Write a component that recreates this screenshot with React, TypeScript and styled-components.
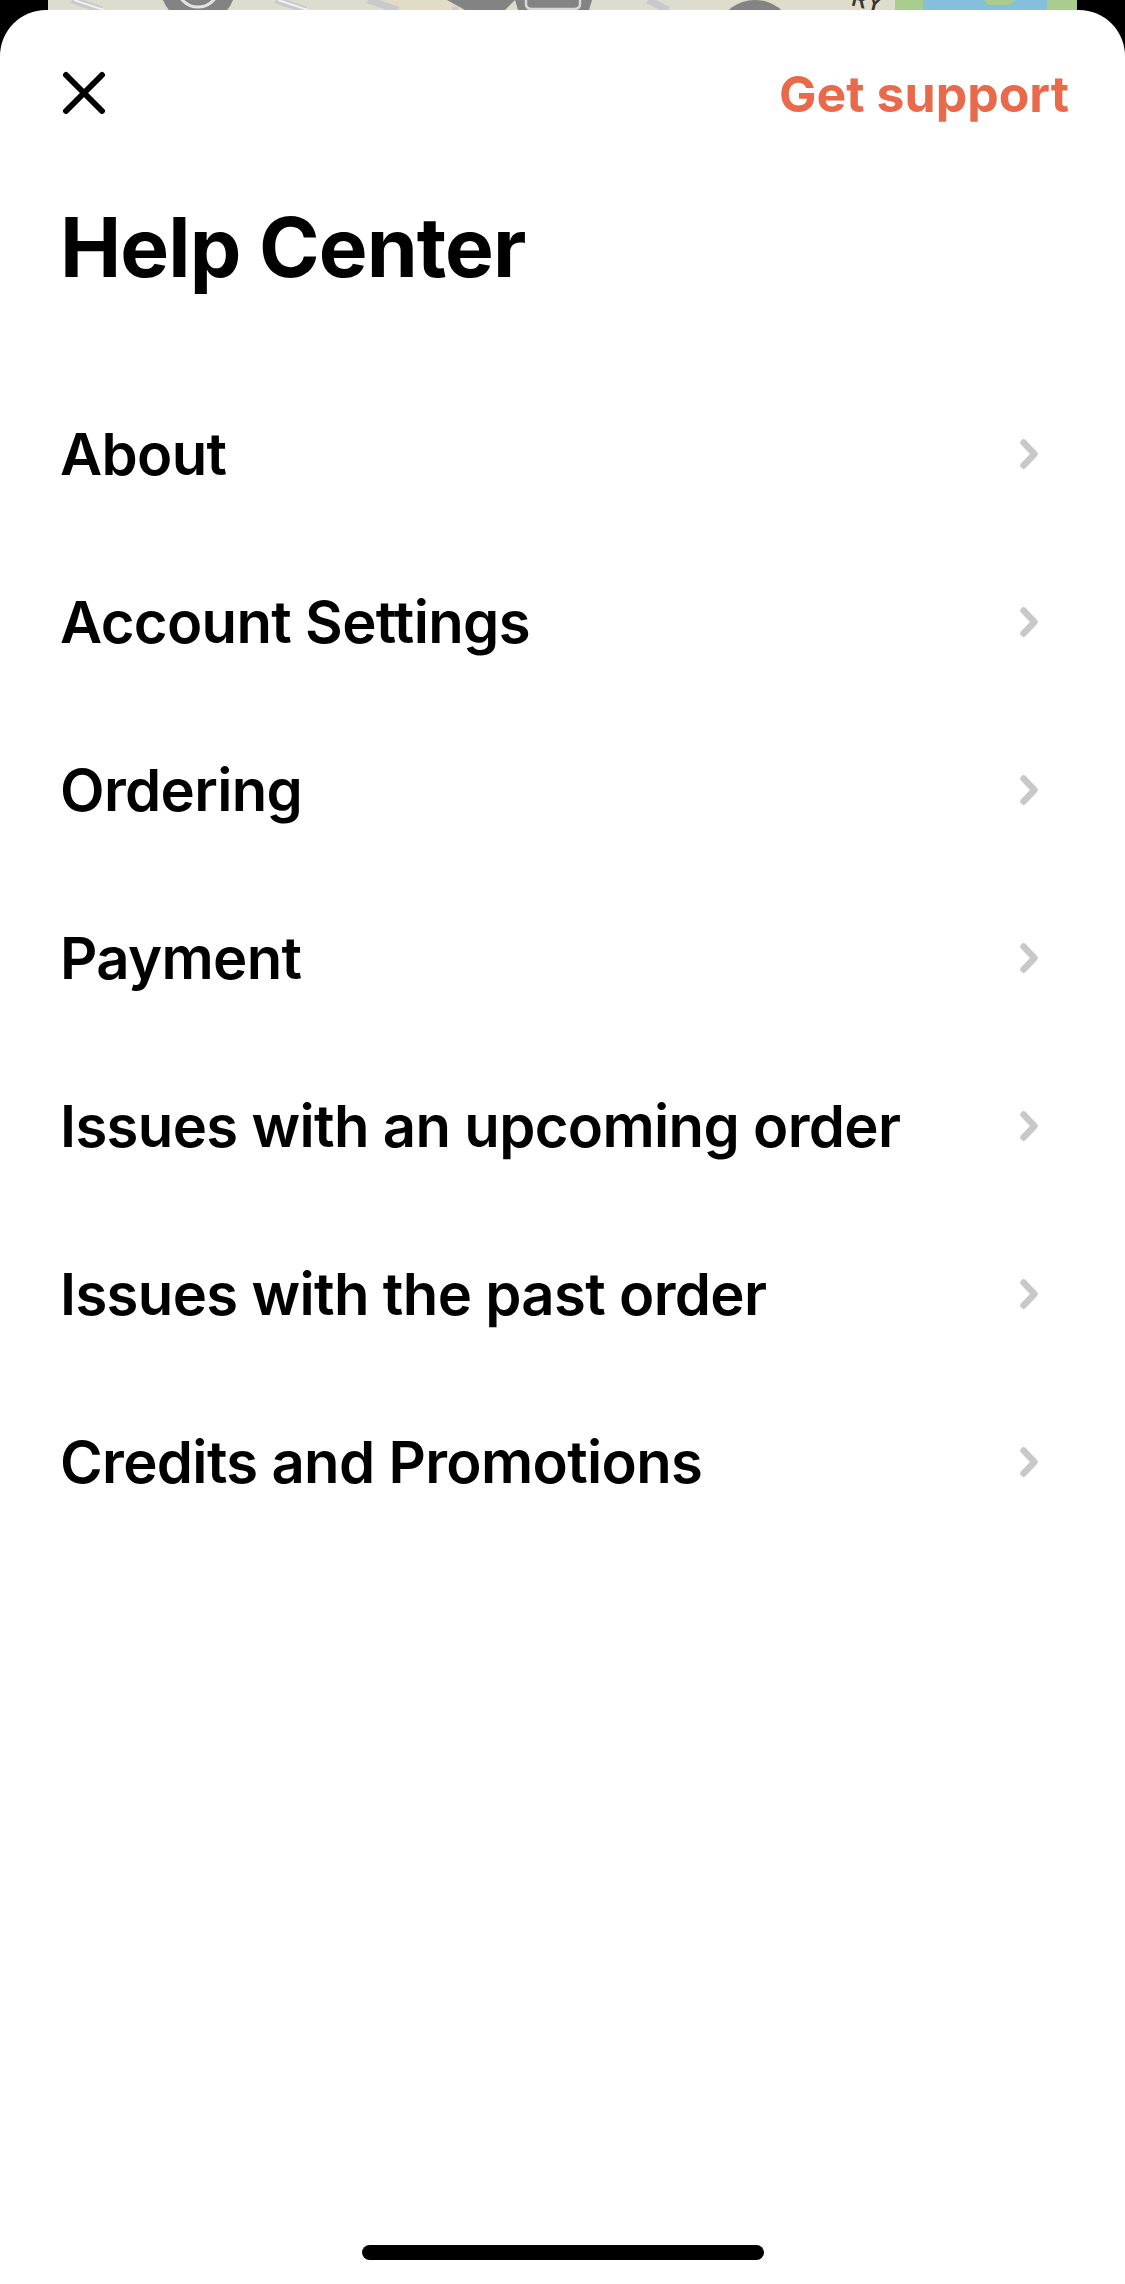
import styled, { createGlobalStyle } from "styled-components";

const GlobalStyle = createGlobalStyle`
  html, body {
    margin: 0;
    padding: 0;
    background: #000;
  }
  body {
    font-family: Inter, "Liberation Sans", sans-serif;
    -webkit-font-smoothing: antialiased;
  }
`;

const Screen = styled.div`
  width: 1125px;
  height: 2284px;
  display: flex;
  flex-direction: column;
  background: #000;
  overflow: hidden;
`;

const MapPeek = styled.svg`
  display: block;
  flex: none;
  width: 1029px;
  height: 10px;
  margin: 0 48px;
`;

const Sheet = styled.main`
  flex: 1;
  display: flex;
  flex-direction: column;
  background: #fff;
  border-radius: 46px 46px 0 0;
`;

const TopBar = styled.header`
  display: flex;
  align-items: center;
  justify-content: space-between;
  height: 60px;
  margin-top: 54px;
  padding: 0 56px 0 62px;
`;

const CloseButton = styled.button`
  display: flex;
  width: 44px;
  height: 44px;
  margin-top: -2px;
  padding: 0;
  border: none;
  background: none;
`;

const SupportLink = styled.a`
  font-size: 50px;
  line-height: 60px;
  font-weight: 700;
  letter-spacing: 0;
  color: #e96a4b;
`;

const Title = styled.h1`
  margin: 74px 0 0;
  padding-left: 60px;
  font-size: 82px;
  line-height: 100px;
  font-weight: 700;
  letter-spacing: -0.9px;
  color: #000;
`;

const TopicList = styled.ul`
  list-style: none;
  margin: 72px 0 0;
  padding: 0;
`;

const TopicRow = styled.li`
  display: flex;
  align-items: center;
  justify-content: space-between;
  height: 168px;
  padding: 0 87px 0 60px;
`;

const TopicLabel = styled.span`
  font-size: 58px;
  line-height: 70px;
  font-weight: 600;
  letter-spacing: -0.65px;
  color: #000;
`;

const Chevron = styled.svg`
  display: block;
  width: 18px;
  height: 30px;
`;

const HomeBar = styled.div`
  align-self: center;
  width: 402px;
  height: 15px;
  margin: auto 0 24px;
  border-radius: 8px;
  background: #000;
`;

const topics = [
  "About",
  "Account Settings",
  "Ordering",
  "Payment",
  "Issues with an upcoming order",
  "Issues with the past order",
  "Credits and Promotions",
];

function MapStrip() {
  return (
    <MapPeek viewBox="0 0 1029 10" aria-hidden="true">
      <rect width="1029" height="10" fill="#dcdccf" />
      <rect x="640" width="210" height="10" fill="#dfdccb" />
      <rect x="340" width="80" height="10" fill="#e2dcc6" />
      <path d="M24 0l30 10M228 0l30 10M320 0l30 10M410 10l-6 0M520 10l14-10M600 0l20 10" stroke="#c9c9cc" strokeWidth="7" />
      <path d="M26 0l30 10M230 0l30 10" stroke="#f0f0ee" strokeWidth="2" />
      <circle cx="150" cy="-14" r="37.7" fill="#838383" />
      <circle cx="150" cy="-14" r="21" fill="none" stroke="#e4e4e4" strokeWidth="3" />
      <path d="M399 0h68l-10 10h-40z" fill="#838383" />
      <path d="M467 0h77l-3 10h-71z" fill="#838383" />
      <path d="M478 0v4q0 5 6 5h42q6 0 6-5V0" fill="none" stroke="#d8d8d8" strokeWidth="2.5" />
      <ellipse cx="707" cy="26" rx="33" ry="26" fill="#838383" />
      <text x="802" y="5" fontFamily="Inter, sans-serif" fontSize="24" fontWeight="500" fill="#333" transform="rotate(15 802 5)">RY</text>
      <rect x="847" width="182" height="10" fill="#a9cd8c" />
      <rect x="875" width="124" height="10" fill="#85bfdc" />
      <path d="M935 0h32l-6 5h-20z" fill="#a9cd8c" />
    </MapPeek>
  );
}

function App() {
  return (
    <Screen>
      <GlobalStyle />
      <MapStrip />
      <Sheet>
        <TopBar>
          <CloseButton aria-label="Close">
            <svg width="44" height="44" viewBox="0 0 44 44" fill="none">
              <path d="M4 4l36 36M40 4L4 40" stroke="#000" strokeWidth="6" strokeLinecap="round" />
            </svg>
          </CloseButton>
          <SupportLink>Get support</SupportLink>
        </TopBar>
        <Title>Help Center</Title>
        <TopicList>
          {topics.map((topic) => (
            <TopicRow key={topic}>
              <TopicLabel>{topic}</TopicLabel>
              <Chevron viewBox="0 0 18 30" fill="none">
                <path d="M3.5 3.5L14.5 15L3.5 26.5" stroke="#c8c8c8" strokeWidth="6.5" strokeLinecap="round" strokeLinejoin="round" />
              </Chevron>
            </TopicRow>
          ))}
        </TopicList>
        <HomeBar />
      </Sheet>
    </Screen>
  );
}

export default App;
